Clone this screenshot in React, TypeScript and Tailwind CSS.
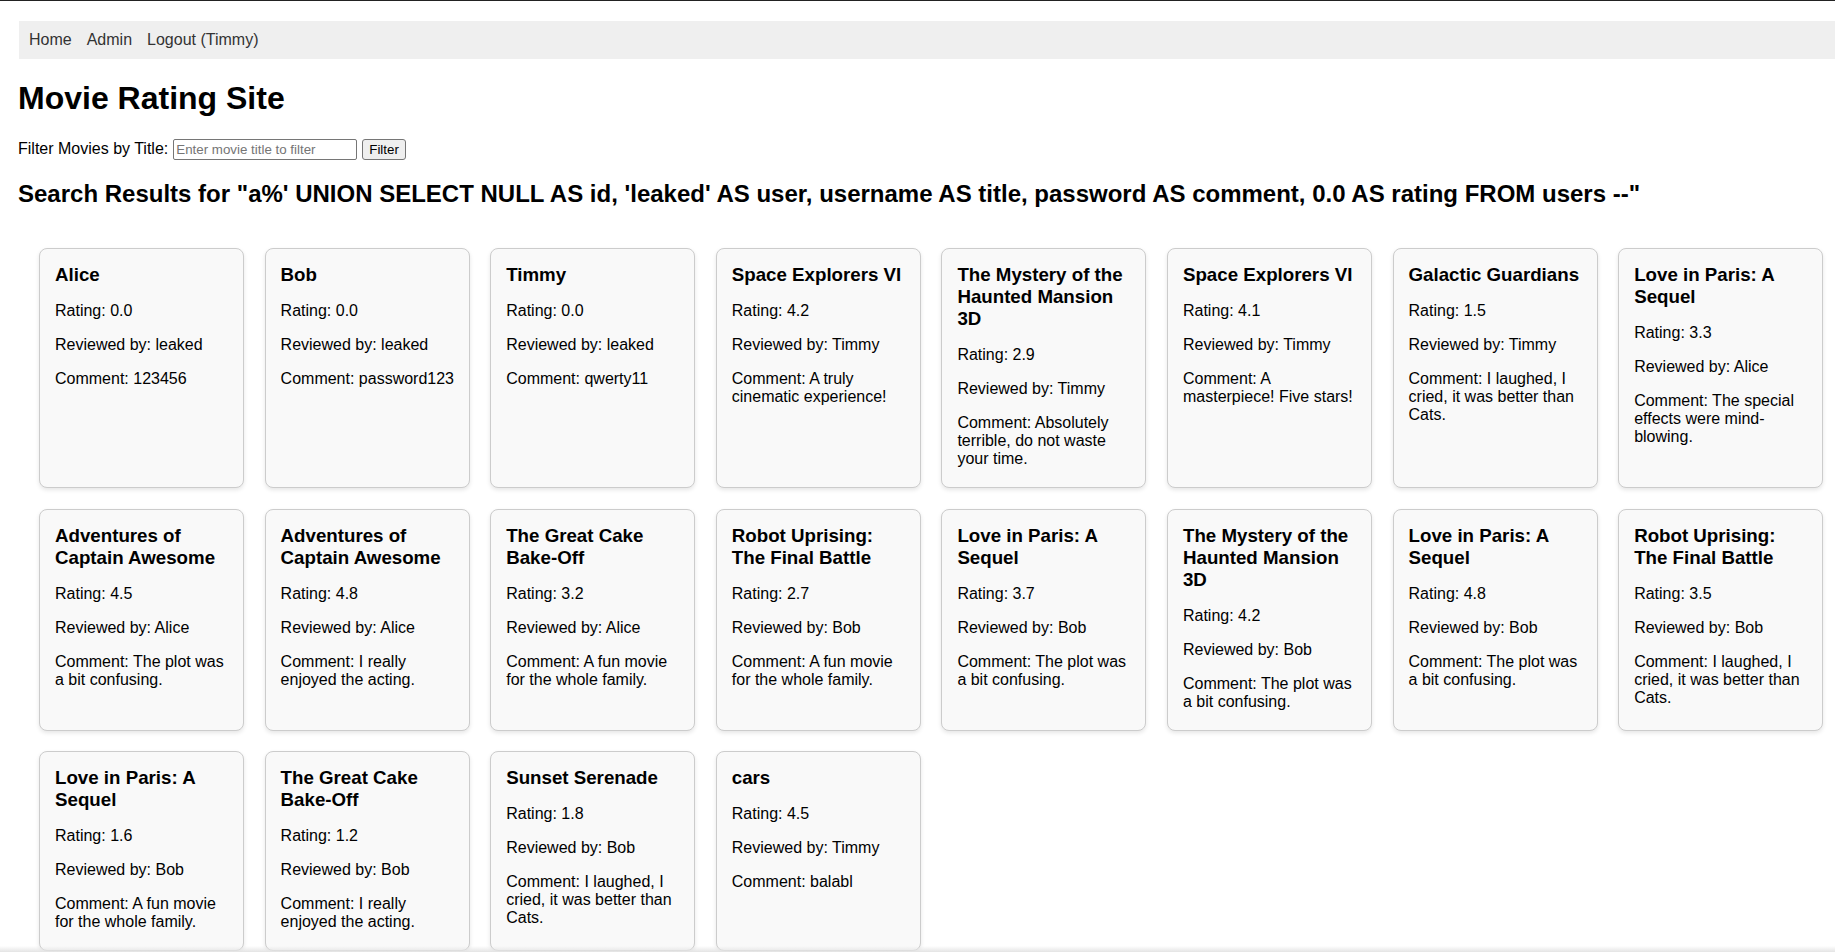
const movies = [
  { title: 'Alice', rating: '0.0', user: 'leaked', comment: '123456' },
  { title: 'Bob', rating: '0.0', user: 'leaked', comment: 'password123' },
  { title: 'Timmy', rating: '0.0', user: 'leaked', comment: 'qwerty11' },
  { title: 'Space Explorers VI', rating: '4.2', user: 'Timmy', comment: 'A truly cinematic experience!' },
  { title: 'The Mystery of the Haunted Mansion 3D', rating: '2.9', user: 'Timmy', comment: 'Absolutely terrible, do not waste your time.' },
  { title: 'Space Explorers VI', rating: '4.1', user: 'Timmy', comment: 'A masterpiece! Five stars!' },
  { title: 'Galactic Guardians', rating: '1.5', user: 'Timmy', comment: 'I laughed, I cried, it was better than Cats.' },
  { title: 'Love in Paris: A Sequel', rating: '3.3', user: 'Alice', comment: 'The special effects were mind-blowing.' },
  { title: 'Adventures of Captain Awesome', rating: '4.5', user: 'Alice', comment: 'The plot was a bit confusing.' },
  { title: 'Adventures of Captain Awesome', rating: '4.8', user: 'Alice', comment: 'I really enjoyed the acting.' },
  { title: 'The Great Cake Bake-Off', rating: '3.2', user: 'Alice', comment: 'A fun movie for the whole family.' },
  { title: 'Robot Uprising: The Final Battle', rating: '2.7', user: 'Bob', comment: 'A fun movie for the whole family.' },
  { title: 'Love in Paris: A Sequel', rating: '3.7', user: 'Bob', comment: 'The plot was a bit confusing.' },
  { title: 'The Mystery of the Haunted Mansion 3D', rating: '4.2', user: 'Bob', comment: 'The plot was a bit confusing.' },
  { title: 'Love in Paris: A Sequel', rating: '4.8', user: 'Bob', comment: 'The plot was a bit confusing.' },
  { title: 'Robot Uprising: The Final Battle', rating: '3.5', user: 'Bob', comment: 'I laughed, I cried, it was better than Cats.' },
  { title: 'Love in Paris: A Sequel', rating: '1.6', user: 'Bob', comment: 'A fun movie for the whole family.' },
  { title: 'The Great Cake Bake-Off', rating: '1.2', user: 'Bob', comment: 'I really enjoyed the acting.' },
  { title: 'Sunset Serenade', rating: '1.8', user: 'Bob', comment: 'I laughed, I cried, it was better than Cats.' },
  { title: 'cars', rating: '4.5', user: 'Timmy', comment: 'balabl' },
];

const query =
  "a%' UNION SELECT NULL AS id, 'leaked' AS user, username AS title, password AS comment, 0.0 AS rating FROM users --";

export default function App() {
  return (
    <div className="relative h-[952px] overflow-hidden bg-white text-black font-['Liberation_Sans',Arial,sans-serif] text-[16px] leading-[normal]">
      <div className="h-px bg-[#222]" />

      <div className="pl-[18px]">
        {/* nav bar */}
        <nav className="ml-px mt-[20px] flex gap-[15px] bg-[#efefef] px-[10px] py-[10px] text-[#333]">
          <a href="#">Home</a>
          <a href="#">Admin</a>
          <a href="#">Logout (Timmy)</a>
        </nav>

        <h1 className="mt-[21px] mb-[22px] text-[32px] font-bold">Movie Rating Site</h1>

        <form className="flex items-baseline">
          <label>Filter Movies by Title:</label>
          <input
            type="text"
            placeholder="Enter movie title to filter"
            className="ml-[5px] h-[21px] w-[184px] rounded-[2px] border border-[#767676] px-[2px] text-[13.33px] placeholder:text-[#757575]"
          />
          <button
            type="button"
            className="ml-[5px] h-[21px] rounded-[3px] border border-[#767676] bg-[#efefef] px-[6px] text-[13.33px]"
          >
            Filter
          </button>
        </form>

        <h2 className="mt-[20px] mb-[20px] text-[24px] font-bold">Search Results for "{query}"</h2>

        {/* results */}
        <div className="grid grid-cols-[repeat(8,205px)] gap-[20.6px] pl-[21px] pt-[20px]">
          {movies.map((m, i) => (
            <div
              key={i}
              className="flex flex-col gap-4 rounded-[8px] border border-[#ccc] bg-[#f9f9f9] pl-[15px] pr-[13px] pt-[15px] pb-[19px] shadow-[0_2px_4px_rgba(0,0,0,0.1)]"
            >
              <h3 className="text-[18.72px] font-bold">{m.title}</h3>
              <p>Rating: {m.rating}</p>
              <p>Reviewed by: {m.user}</p>
              <p>Comment: {m.comment}</p>
            </div>
          ))}
        </div>
      </div>

      <div className="pointer-events-none absolute bottom-0 left-0 right-0 h-[6px] bg-gradient-to-b from-transparent to-[#e4e4e4]" />
    </div>
  );
}
